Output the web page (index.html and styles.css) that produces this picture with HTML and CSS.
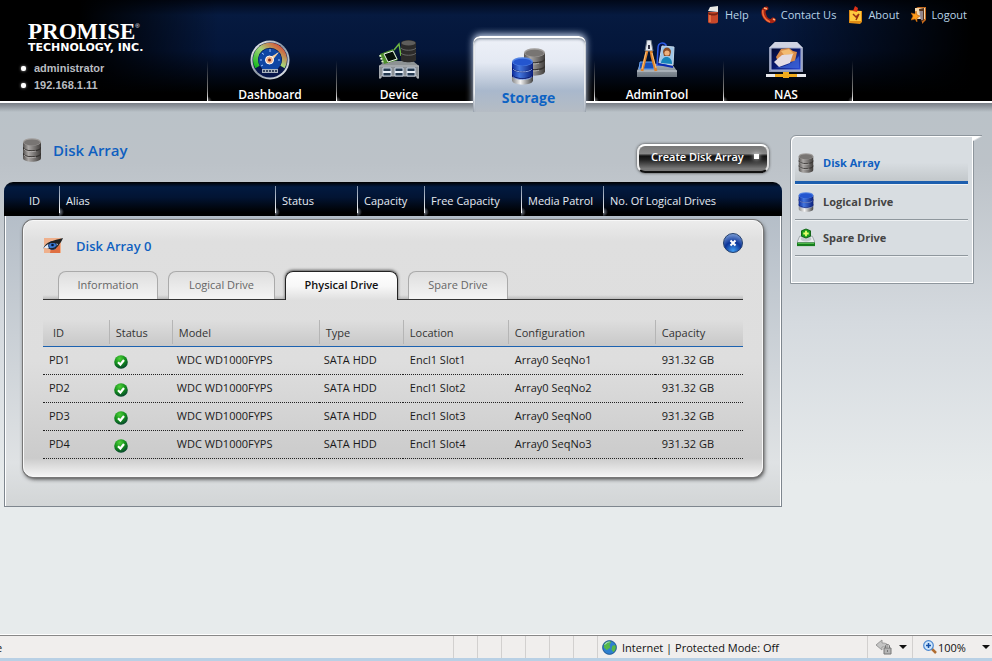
FILE: index.html
```html
<!DOCTYPE html>
<html lang="en">
<head>
<meta charset="utf-8">
<title>Disk Array</title>
<meta name="viewport" content="width=device-width, initial-scale=1">
<link rel="stylesheet" href="styles.css">
</head>
<body>
<svg class="defs" aria-hidden="true">
  <defs>
    <linearGradient id="steel"><stop offset="0" stop-color="#54514f"/><stop offset=".3" stop-color="#aaa7a5"/><stop offset="1" stop-color="#403d3b"/></linearGradient>
    <linearGradient id="blue"><stop offset="0" stop-color="#0b2a9a"/><stop offset=".35" stop-color="#4376de"/><stop offset="1" stop-color="#0a1f7c"/></linearGradient>
    <linearGradient id="silver"><stop offset="0" stop-color="#888"/><stop offset=".4" stop-color="#f4f4f4"/><stop offset="1" stop-color="#444"/></linearGradient>
    <linearGradient id="rim" x2="1" y2="1"><stop offset="0" stop-color="#fff"/><stop offset=".5" stop-color="#8d98a5"/><stop offset="1" stop-color="#f4f7fa"/></linearGradient>
    <linearGradient id="dial" x1="0" y1="1" x2="1" y2="0"><stop offset="0" stop-color="#13b81c"/><stop offset=".5" stop-color="#a6d47a"/><stop offset="1" stop-color="#e03a2a"/></linearGradient>
    <radialGradient id="green" cx=".4" cy=".25" r=".8"><stop offset="0" stop-color="#4fd03a"/><stop offset=".5" stop-color="#14911c"/><stop offset="1" stop-color="#063c30"/></radialGradient>
    <radialGradient id="ball" cx=".5" cy=".9" r=".9"><stop offset="0" stop-color="#3f9bf0"/><stop offset=".5" stop-color="#0b3498"/><stop offset="1" stop-color="#7d9fd8"/></radialGradient>
    <linearGradient id="screen" x2="1" y2="1"><stop offset="0" stop-color="#02082e"/><stop offset=".5" stop-color="#0a1a70"/><stop offset="1" stop-color="#2c4fe0"/></linearGradient>
    <linearGradient id="tray" x2="0" y2="1"><stop offset="0" stop-color="#a9b2ba"/><stop offset="1" stop-color="#6d767f"/></linearGradient>
    <symbol id="disk" viewBox="0 0 18 24">
      <path d="M0 4v16c0 5 18 5 18 0V4z" fill="url(#steel)"/>
      <path d="M0 9c0 5 18 5 18 0M0 15c0 5 18 5 18 0" fill="none" stroke="#353230" stroke-width="1.2"/>
      <path d="M1 11c2 3 9 3 12 2M1 17c2 3 9 3 12 2" fill="none" stroke="#c8c6c4" stroke-width=".7"/>
      <ellipse cx="9" cy="4" rx="9" ry="3.8" fill="#a09d9b"/><ellipse cx="9" cy="4.4" rx="8" ry="3" fill="#787573"/>
    </symbol>
    <symbol id="disk-blue" viewBox="0 0 18 24">
      <path d="M0 4v16c0 5 18 5 18 0V4z" fill="url(#silver)"/>
      <path d="M0 4v11c0 5 18 5 18 0V4z" fill="url(#blue)"/>
      <path d="M0 9c0 5 18 5 18 0M0 15c0 5 18 5 18 0" fill="none" stroke="#07156a" stroke-width="1.2"/>
      <path d="M1 10.500c2 3 14 3 16 0M1 17c2 3 14 3 16 0" fill="none" stroke="#a9c8ff" stroke-width=".7"/>
      <ellipse cx="9" cy="4" rx="9" ry="3.8" fill="#5585e4"/><ellipse cx="9" cy="4.4" rx="8" ry="3" fill="#2456cf"/>
    </symbol>
    <symbol id="ok" viewBox="0 0 14 14">
      <circle cx="7" cy="7" r="6.8" fill="url(#green)"/>
      <path d="M4 7.200l2.400 2.300L10 5" fill="none" stroke="#fff" stroke-width="2.200"/>
    </symbol>
  </defs>
</svg>

<header class="masthead">
  <div class="brand">
    <div class="logo"><span class="logo-name">PROMISE<sup>®</sup></span><span class="logo-sub">TECHNOLOGY, INC.</span></div>
    <ul class="session"><li>administrator</li><li>192.168.1.11</li></ul>
  </div>
  <nav class="tabs-main" aria-label="Main">
    <a href="#dashboard">
      <svg viewBox="0 0 40 40"><circle cx="20" cy="20" r="19.500" fill="url(#rim)"/><circle cx="20" cy="20" r="17.500" fill="#07164a"/><path d="M7.500 27A14.500 14.500 0 1 1 32.500 27" fill="none" stroke="url(#dial)" stroke-width="5"/><circle cx="20" cy="20" r="11.500" fill="#0f46a4"/><path d="M10 20h2M12 13l2 1.500M20 9v3M28 13l-2 1.500M30 20h-2M11 26l2-1" stroke="#9fc3ff"/><path d="M19 18l10-6-7 9z" fill="#f5cf9d"/><circle cx="19.500" cy="20" r="4" fill="#f3b489" stroke="#fff"/><circle cx="19.500" cy="20" r="1.500" fill="#7c2413"/><path d="M12 29h16v4H12z" fill="#a9b2bd"/><path d="M13 31h14" stroke="#34435e" stroke-width="2" stroke-dasharray="2 1"/></svg>
      Dashboard</a>
    <a href="#device">
      <svg viewBox="0 0 40 40"><path d="M0 26l6-5h28l6 5z" fill="#8d9294"/><path d="M1 14l13-5 5 11-14 4z" fill="#4d8f2c"/><path d="M1 15l3 8" stroke="#dff5c8" stroke-width="2" stroke-dasharray="2 1"/><path d="M5 14l9-3 4 8-9 3z" fill="#07120a" stroke="#e6efe6"/><path d="M15 10l5-6 2 12" fill="none" stroke="#6eb742" stroke-width="1.500"/><path d="M22 3c0-4 15-4 15 0v17c0 3-15 3-15 0z" fill="#2c2b2a"/><ellipse cx="29.500" cy="3" rx="7" ry="2.600" fill="#5f5e5c"/><path d="M22 8c2 3 13 3 15 0M22 13c2 3 13 3 15 0" fill="none" stroke="#666"/><path d="M0 26h40v12h-2v-2H2v2H0z" fill="#8b9196" stroke="#b9bdc1"/><path d="M4 28h8v8H4zM16 28h8v8h-8zM28 28h8v8h-8z" fill="#23384e" stroke="#c9d3e2"/><path d="M4 32h8M16 32h8M28 32h8" stroke="#e6edf6" stroke-width="2"/></svg>
      Device</a>
    <a href="#storage" class="current" aria-current="page">
      <svg viewBox="0 0 34 38"><use href="#disk" x="12" y="0" width="21" height="28"/><use href="#disk-blue" x="0" y="9" width="21" height="28"/></svg>
      Storage</a>
    <a href="#admintool">
      <svg viewBox="0 0 40 40"><path d="M3 24h32l5 7v6H0v-6z" fill="url(#tray)"/><path d="M0 31h40" stroke="#c7ced5"/><path d="M3 22h14v7H2z" fill="#1550bd" stroke="#69a2ef"/><path d="M21 8c0-6 6-6 8-3v20h-9z" fill="#06124a" stroke="#2c5ce8" stroke-width="1.500"/><path d="M25 6l12 1-1 18-14-2z" fill="#9fc6e8" stroke="#c5d7e6"/><path d="M26 12c0-6 8-6 8 0l-1 4h-6z" fill="#8a4a24"/><circle cx="30" cy="13" r="2.600" fill="#eeb07c"/><path d="M24 23c1-8 11-8 11 1z" fill="#1684ba"/><path d="M21 24l15 3" stroke="#0b2bb0" stroke-width="2"/><path d="M10 0h4l2 11H8z" fill="#e4e8ee" stroke="#687381"/><path d="M11 5h2v4h-2z" fill="#334"/><path d="M10 11L5 31M14 11c1 8 3 12 5 20" fill="none" stroke="#e0822a" stroke-width="2.800"/><path d="M9 12L5 29M15 13l4 15" stroke="#ffd496" stroke-width=".8"/></svg>
      AdminTool</a>
    <a href="#nas">
      <svg viewBox="0 0 40 40"><path d="M3 8l6-6h22l6 6v24H3z" fill="#8f98b4"/><path d="M3 8l6-6h22l6 6z" fill="#d0d3e2"/><path d="M5 8h30v22H5z" fill="url(#screen)" stroke="#aab4d6"/><path d="M10 17l5-8 8-1 4 3 4 1-2 9-16 3z" fill="#d98c4a"/><path d="M15 11l8-2 5 5-10 1z" fill="#f3bb72"/><path d="M8 22l8-7 11-1-3 9-11 4z" fill="#e3dce4"/><path d="M7 28c6 0 18-2 26-12v12z" fill="#3f66d8" opacity=".7"/><path d="M0 34h40v3H0z" fill="#e9eaee"/><path d="M9 34h22v3H9zM17 32h6v6h-6z" fill="#f0ab1c"/></svg>
      NAS</a>
  </nav>
  <ul class="links">
    <li><a href="#help"><svg viewBox="0 0 16 18"><path d="M3 6h10v10c0 2-10 2-10 0z" fill="#c8482a"/><path d="M3 5l2-4 8-1v6z" fill="#e8e8e4"/><path d="M3 6c2 2 8 2 10 0v2c-2 2-8 2-10 0z" fill="#7c2412"/><path d="M5 9v7" stroke="#f99a62"/></svg>Help</a></li>
    <li><a href="#contact"><svg viewBox="0 0 16 18"><path d="M1 3c3-4 8-3 6 1-2 0-3 1-2 4 1 4 3 5 5 5 1-2 4-2 5 1-1 4-7 4-10 1C1 12-1 7 1 3z" fill="#a82412"/><path d="M2 4c-1 5 2 10 7 12" fill="none" stroke="#f4703c" stroke-width="1.500"/><path d="M3 2l3 1M12 13l2 1" stroke="#ffb27a" stroke-width="1.500"/></svg>Contact Us</a></li>
    <li><a href="#about"><svg viewBox="0 0 16 18"><path d="M1 4l13 1v11l-2 2-11-1z" fill="#e08c14"/><path d="M2 5h11v10H2z" fill="#ffc93f"/><path d="M7 0l3 2-1 4-4-1z" fill="#db3116"/><path d="M5 8l3 3 3-3-3 6" fill="none" stroke="#983112" stroke-width="1.500"/></svg>About</a></li>
    <li><a href="#logout"><svg viewBox="0 0 16 18"><path d="M5 1h10v13l-4 4V4z" fill="#c66a1c"/><path d="M4 2h10v11H4z" fill="#f4d5a8"/><path d="M8 3l5-1v12l-3 2z" fill="#54311b"/><path d="M9 5v8M11 5v9" stroke="#cfdcff"/><path d="M0 7l4 1 1-3 1 4 3 1-3 2v4l-2-3-4 1 2-4z" fill="#ff9c1a" stroke="#b85c08" stroke-width=".6"/></svg>Logout</a></li>
  </ul>
</header>

<div class="content">
  <main>
    <div class="page-head">
      <svg class="ico-disk" viewBox="0 0 18 24"><use href="#disk"/></svg>
      <h1>Disk Array</h1>
      <button type="button" class="create">Create Disk Array</button>
    </div>
    <table class="arrays">
      <colgroup><col class="a-id"><col><col class="a-status"><col class="a-cap"><col class="a-free"><col class="a-media"><col class="a-count"></colgroup>
      <thead><tr><th scope="col">ID</th><th scope="col">Alias</th><th scope="col">Status</th><th scope="col">Capacity</th><th scope="col">Free Capacity</th><th scope="col">Media Patrol</th><th scope="col">No. Of Logical Drives</th></tr></thead>
      <tbody><tr><td colspan="7">
        <section class="panel">
          <div class="panel-head">
            <svg class="ico-eye" viewBox="0 0 20 18"><path d="M1 1h17v15H1z" fill="#efb08c"/><path d="M8 11l9-3v8H7z" fill="#df6f42"/><path d="M0 11c3-6 9-7 17-6-2 5-8 9-14 6z" fill="#e3ecf8"/><circle cx="9.500" cy="8.500" r="4" fill="#3b78d0" stroke="#163466"/><circle cx="9.500" cy="8" r="1.300" fill="#06122b"/><path d="M0 12C3 4 10 4 20 1c-1 3-3 5-4 7-2 3-7 6-12 3 5 1 9 0 11-4C9 5 4 6 0 12z" fill="#222"/></svg>
            <h2>Disk Array 0</h2>
            <button type="button" class="close" aria-label="Close"><svg viewBox="0 0 20 20"><circle cx="10" cy="10" r="9.500" fill="url(#ball)" stroke="#25406c"/><path d="M7.500 7.500l5 5M12.500 7.500l-5 5" stroke="#fff" stroke-width="2"/></svg></button>
          </div>
          <div class="tabs" role="tablist">
            <button type="button" role="tab">Information</button>
            <button type="button" role="tab" class="wide">Logical Drive</button>
            <button type="button" role="tab" class="on" aria-selected="true">Physical Drive</button>
            <button type="button" role="tab">Spare Drive</button>
          </div>
          <table class="drives">
            <colgroup><col class="d-id"><col class="d-status"><col class="d-model"><col class="d-type"><col class="d-loc"><col class="d-conf"><col class="d-cap"></colgroup>
            <thead><tr><th scope="col">ID</th><th scope="col">Status</th><th scope="col">Model</th><th scope="col">Type</th><th scope="col">Location</th><th scope="col">Configuration</th><th scope="col">Capacity</th></tr></thead>
            <tbody>
              <tr><td>PD1</td><td><svg role="img" aria-label="OK"><use href="#ok"/></svg></td><td>WDC WD1000FYPS</td><td>SATA HDD</td><td>Encl1 Slot1</td><td>Array0 SeqNo1</td><td>931.32 GB</td></tr>
              <tr><td>PD2</td><td><svg role="img" aria-label="OK"><use href="#ok"/></svg></td><td>WDC WD1000FYPS</td><td>SATA HDD</td><td>Encl1 Slot2</td><td>Array0 SeqNo2</td><td>931.32 GB</td></tr>
              <tr><td>PD3</td><td><svg role="img" aria-label="OK"><use href="#ok"/></svg></td><td>WDC WD1000FYPS</td><td>SATA HDD</td><td>Encl1 Slot3</td><td>Array0 SeqNo0</td><td>931.32 GB</td></tr>
              <tr><td>PD4</td><td><svg role="img" aria-label="OK"><use href="#ok"/></svg></td><td>WDC WD1000FYPS</td><td>SATA HDD</td><td>Encl1 Slot4</td><td>Array0 SeqNo3</td><td>931.32 GB</td></tr>
            </tbody>
          </table>
        </section>
      </td></tr></tbody>
    </table>
  </main>
  <aside>
    <nav class="side" aria-label="Storage">
      <a href="#disk-array" class="current"><svg viewBox="0 0 18 24"><use href="#disk"/></svg>Disk Array</a>
      <a href="#logical-drive"><svg viewBox="0 0 18 24"><use href="#disk-blue"/></svg>Logical Drive</a>
      <a href="#spare-drive"><svg viewBox="0 0 20 20"><path d="M3 8h14l3 7H0z" fill="#e9ecee" stroke="#9aa1a6"/><ellipse cx="10" cy="11" rx="6" ry="3" fill="#c3c9cd"/><path d="M0 15h20v4H0z" fill="#167d1d"/><path d="M1 16h18" stroke="#5cc858"/><path d="M5 2l5-2 5 2v6l-5 2-5-2z" fill="#199c1e" stroke="#0a5c10"/><path d="M10 2v6M7 5h6" stroke="#e8ff6b" stroke-width="2"/></svg>Spare Drive</a>
    </nav>
  </aside>
</div>

<footer class="statusbar">
  <span class="msg">e</span>
  <span class="cell"></span><span class="cell"></span><span class="cell"></span><span class="cell"></span><span class="cell"></span><span class="cell"></span>
  <span class="zone"><svg viewBox="0 0 16 16"><circle cx="8" cy="8" r="7.500" fill="#2e7fd0"/><path d="M2 4c3-4 7-3 8-2L8 5l1 3-4 3-3-3zM11 6l4-1v5l-3 3-2-3z" fill="#55b848"/><path d="M3 5c2-3 4-3 5-3" stroke="#c9e9ff" fill="none"/><circle cx="8" cy="8" r="7.300" fill="none" stroke="#23598f"/></svg>Internet | Protected Mode: Off</span>
  <button type="button" class="privacy" aria-label="Privacy settings"><svg viewBox="0 0 16 16"><path d="M0 6l6-5v3c4 0 6 1 6 4H6v3z" fill="#c4c4c4" stroke="#999"/><path d="M8 9h7v6H8z" fill="#b5b5b5" stroke="#777"/><path d="M9.500 9V7c0-2 4-2 4 0v2M11.500 11v2" fill="none" stroke="#777"/></svg><i class="arrow"></i></button>
  <button type="button" class="zoom"><svg viewBox="0 0 14 14"><path d="M8 8l5 5" stroke="#b06c30" stroke-width="2.500"/><circle cx="5.500" cy="5.500" r="4.800" fill="#cfe6fb" stroke="#4a86cf" stroke-width="1.200"/><path d="M5.500 3v5M3 5.500h5" stroke="#1450a8" stroke-width="1.500"/></svg><span>100%</span><i class="arrow"></i></button>
</footer>
</body>
</html>
```
FILE: styles.css
```css
* { box-sizing: border-box; }

body {
  margin: 0;
  min-height: 100vh;
  display: flex;
  flex-direction: column;
  font: 11px/16px "Open Sans", sans-serif;
  color: #1a1a1a;
  background: #e7ebec;
}

ul { list-style: none; margin: 0; padding: 0; }
a { color: inherit; text-decoration: none; }
button { font: inherit; color: inherit; border: 0; padding: 0; background: none; }
svg { display: block; flex: none; }
.defs { position: absolute; width: 0; height: 0; }

/* Masthead */
.masthead {
  display: flex;
  height: 103px;
  border-bottom: 2px solid #fff;
  background:
    linear-gradient(90deg, #000 8%, rgba(0, 0, 0, 0) 22%, rgba(0, 0, 0, 0) 78%, #000 98%),
    linear-gradient(#010818, #061a40 15%, #04163a 50%, #000 92%);
}
.brand { flex: 0 0 207px; padding: 20px 0 0 28px; }
.logo { color: #fff; }
.logo-name { display: flex; height: 22px; font: bold 23px/24px "Liberation Serif", serif; }
.logo-name sup { font: 6px/12px "Liberation Sans", sans-serif; }
.logo-sub { display: block; font: bold 11px/11px "DejaVu Sans", sans-serif; }
.session { margin: 7px 0 0 -7px; color: #b9bcc0; font: bold 11px/17px "Liberation Sans", sans-serif; }
.session li { display: flex; align-items: center; gap: 8px; }
.session li::before { content: ""; width: 5px; height: 5px; border-radius: 2px; background: #fff; box-shadow: 0 0 3px #aaa; }

.tabs-main { display: flex; }
.tabs-main a {
  width: 129px;
  padding: 40px 3px 0 0;
  display: flex;
  flex-direction: column;
  align-items: center;
  gap: 7px;
  color: #fff;
  font-size: 12px;
  font-weight: 600;
  line-height: 16px;
  background:
    linear-gradient(rgba(255, 255, 255, 0) 60%, #888 90%, #fff) 0 100% / 1px 101px no-repeat,
    radial-gradient(circle at 0 100%, #777, transparent 5px);
}
.tabs-main a:last-child {
  width: 130px;
  padding-right: 4px;
  background:
    linear-gradient(rgba(255, 255, 255, 0) 60%, #888 90%, #fff) 0 100% / 1px 101px no-repeat,
    linear-gradient(rgba(255, 255, 255, 0) 60%, #888 90%, #fff) 100% 100% / 1px 101px no-repeat,
    radial-gradient(circle at 0 100%, #777, transparent 5px),
    radial-gradient(circle at 100% 100%, #777, transparent 5px);
}
.tabs-main svg { width: 40px; height: 40px; }
.tabs-main .current {
  width: 113px;
  height: 76px;
  margin: 36px 8px 0;
  padding: 12px 2px 0 0;
  gap: 4px;
  border-radius: 7px 7px 0 0;
  color: #0d63c4;
  font-size: 14px;
  font-weight: 700;
  background:
    linear-gradient(#fff 75%, transparent) 0 0 / 2px 100% no-repeat,
    linear-gradient(#fff 75%, transparent) 100% 0 / 2px 100% no-repeat,
    linear-gradient(#eef1f8, #e4e9f3 35%, #a9b8cc 72%, #b5bcc4);
  box-shadow: 0 -2px 7px #c4d2ea, inset 0 2px #fff, inset 0 3px 3px #6f7b8c;
  clip-path: polygon(-8px -9px, 121px -9px, 121px 65px, 113px 65px, 113px 100%, 0 100%, 0 65px, -8px 65px);
}
.tabs-main .current svg { width: 34px; height: 38px; }

.links { display: flex; gap: 12px; position: absolute; top: 6px; right: 25px; color: #b9d4e8; }
.links a { display: flex; align-items: center; gap: 4px; font-size: 11px; line-height: 18px; }
.links svg { width: 16px; height: 18px; }

/* Content */
.content {
  flex: 1;
  display: grid;
  grid-template-columns: 1fr 184px;
  align-items: start;
  gap: 8px;
  padding: 32px 18px 0 4px;
  background: linear-gradient(#777d85, rgba(186, 193, 200, 0) 9px), linear-gradient(#bac2c8, #bcc2c8 60px, #d5dadf 220px, #e7ebec 380px);
}
.page-head { display: flex; align-items: center; height: 47px; padding: 0 13px 17px 19px; }
.ico-disk { width: 18px; height: 24px; }
h1, h2 { margin: 0; color: #0f5fc0; font-weight: 600; }
h1 { margin-left: 12px; font-size: 15px; line-height: 20px; }
.create {
  width: 132px;
  height: 29px;
  margin: 16px 0 0 auto;
  padding: 0 8px 3px 12px;
  display: flex;
  align-items: center;
  justify-content: space-between;
  border: 2px solid #fff;
  border-color: #fff #ddd #111 #eee;
  border-radius: 8px;
  color: #fff;
  font-weight: 600;
  white-space: nowrap;
  background: linear-gradient(#777, #888 30%, #111 40%, #222 55%, #777 90%);
  box-shadow: 0 0 3px #333;
}
.create::after { content: ""; width: 5px; height: 5px; background: #fff; box-shadow: 0 0 5px #fff; }

table { width: 100%; border-collapse: separate; border-spacing: 0; table-layout: fixed; }
th, td { padding: 0; text-align: left; }
.arrays > thead th {
  height: 34px;
  padding: 3px 0 0 7px;
  color: #e6ebf2;
  font-weight: 400;
  white-space: nowrap;
  background:
    linear-gradient(#7c8da5, #fff) 0 4px / 1px 27px no-repeat,
    radial-gradient(circle at 0 30px, #8a929e, transparent 5px),
    linear-gradient(#000, #021a40 5px, #021433 45%, #000 90%);
}
.arrays > thead th:first-child { padding-left: 25px; border-top-left-radius: 9px; background: linear-gradient(#000, #021a40 5px, #021433 45%, #000 90%); }
.arrays > thead th:last-child { border-top-right-radius: 9px; }
.a-id { width: 55px; }
.a-status { width: 82px; }
.a-cap { width: 67px; }
.a-free { width: 97px; }
.a-media { width: 82px; }
.a-count { width: 179px; }
.arrays > tbody > tr > td {
  padding: 4px 18px 29px;
  border: 1px solid #7e868e;
  border-top: 0;
  box-shadow: inset 1px 0 #fff, inset -1px 0 #fff;
  background: linear-gradient(#b5bec8, #c9cfd5 40%, #dfe2e4 85%, #d2d5d6);
}

.panel {
  padding: 13px 19px 17px;
  border: 1px solid #f8f8f8;
  border-radius: 10px;
  background: linear-gradient(#ececec, #dfdfdf 20px, #dedede 55%, #cbcbcb 93%, #f4f4f4);
  box-shadow: 0 0 0 1px #777, 1px 2px 4px #333;
}
.panel-head { display: flex; align-items: center; height: 24px; }
.ico-eye { width: 20px; height: 18px; }
h2 { margin-left: 13px; font-size: 13px; line-height: 20px; }
.close { width: 20px; height: 20px; margin: 0 0 6px auto; }

.tabs { display: flex; align-items: flex-end; gap: 10px; height: 42px; padding-left: 15px; border-bottom: 1px solid #333; background: linear-gradient(transparent 37px, #bbb); }
.tabs button {
  width: 100px;
  height: 28px;
  padding-bottom: 1px;
  border: 1px solid #aaa;
  border-bottom: 0;
  border-radius: 8px 8px 0 0;
  color: #666;
  background: linear-gradient(#dedede, #f4f4f4);
}
.tabs .wide { width: 107px; }
.tabs .on {
  width: 113px;
  height: 29px;
  margin-bottom: -1px;
  padding-bottom: 2px;
  border: 1px solid #222;
  border-bottom: 0;
  color: #111;
  font-weight: 600;
  background: linear-gradient(#fff, #f8f8f8 50%, #dfdfdf);
  box-shadow: 0 -1px 3px #555;
  clip-path: inset(-5px -5px 0 -5px);
}

.drives { margin-top: 20px; }
.drives th {
  height: 27px;
  padding-left: 7px;
  border-bottom: 1px solid #1c62b0;
  color: #333;
  font-weight: 400;
  background: linear-gradient(#b5b5b5, #b5b5b5) 0 0 / 1px 24px no-repeat, linear-gradient(#dedede, #c8c8c8);
}
.drives th:first-child { padding-left: 10px; background: linear-gradient(#dedede, #c8c8c8); }
.drives td { height: 28px; padding: 0 0 1px 5px; border-bottom: 1px dotted #222; }
.drives td:first-child { padding-left: 6px; }
.drives td:nth-child(n+5) { padding-left: 7px; }
.drives svg { width: 14px; height: 14px; margin-top: 4px; }
.d-id { width: 9.400%; }
.d-status { width: 9%; }
.d-model { width: 21%; }
.d-type { width: 12%; }
.d-loc { width: 15%; }
.d-conf { width: 21%; }

/* Section menu */
.side {
  position: relative;
  height: 149px;
  padding: 8px 5px 0 4px;
  border: 1px solid #8e969d;
  border-radius: 6px 0 0 0;
  background: #d8dde1;
  box-shadow: inset 1px 1px #fff, inset -1px -1px #fff;
}
.side::after {
  content: "";
  position: absolute;
  top: -1px;
  right: -9px;
  width: 9px;
  height: 5px;
  border-top: 1px solid #8e969d;
  background: linear-gradient(150deg, #fff 40%, transparent 60%);
}
.side a {
  display: flex;
  align-items: center;
  gap: 8px;
  height: 36px;
  padding-left: 2px;
  border-bottom: 1px solid #8f979d;
  box-shadow: 0 1px #eef1f3;
  color: #444;
  font-weight: 700;
}
.side a svg { width: 18px; height: 20px; }
.side .current { height: 40px; border-bottom: 3px solid #1c5eae; color: #0f5fc0; background: linear-gradient(#d8dde1 50%, #c3c8cb); }

/* Browser status bar */
.statusbar {
  display: flex;
  height: 26px;
  border-top: 1px solid #888;
  border-bottom: 3px solid #b9d0e5;
  box-shadow: 0 -1px #fff;
  background: #f0eeed;
  color: #111;
  line-height: 23px;
}
.statusbar > * { border-left: 1px solid #d2d0cf; }
.statusbar .msg { flex: 1; border: 0; margin-left: -4px; }
.cell { width: 24px; }
.zone { display: flex; align-items: center; gap: 5px; width: 270px; padding-left: 4px; white-space: nowrap; }
.zone svg { width: 15px; height: 15px; }
.privacy, .zoom { display: flex; align-items: center; }
.privacy { width: 45px; padding-left: 8px; gap: 7px; }
.privacy svg { width: 16px; height: 16px; }
.zoom { width: 80px; padding: 0 2px 0 10px; gap: 1px; }
.zoom svg { width: 14px; height: 14px; }
.zoom .arrow { margin-left: auto; }
.arrow { border: 4px solid transparent; border-top-color: #111; border-bottom: 0; }
```
